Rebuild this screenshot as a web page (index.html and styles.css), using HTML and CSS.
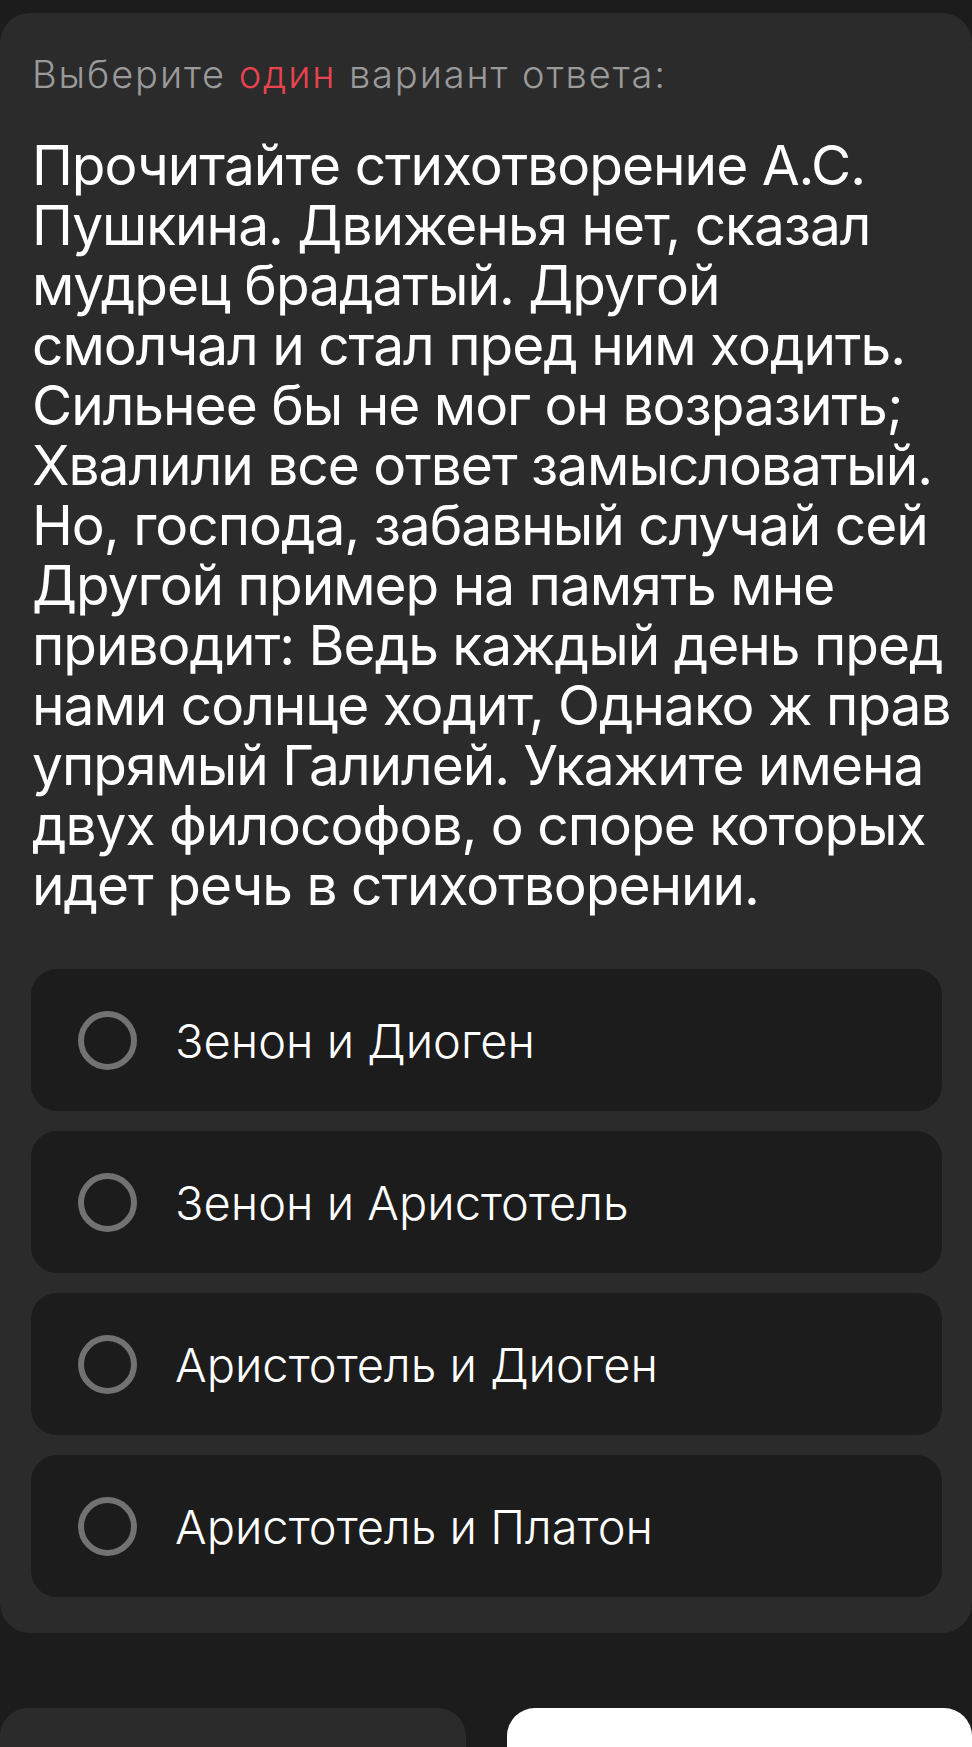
FILE: index.html
```html
<!DOCTYPE html>
<html lang="ru">
<head>
<meta charset="utf-8">
<title>Вопрос</title>
<link rel="stylesheet" href="styles.css">
</head>
<body>
<div class="page">
  <section class="card">
    <p class="prompt">Выберите <span class="accent">один</span> вариант ответа:</p>
    <p class="question">Прочитайте стихотворение А.С.<br>Пушкина. Движенья нет, сказал<br>мудрец брадатый. Другой<br>смолчал и стал пред ним ходить.<br>Сильнее бы не мог он возразить;<br>Хвалили все ответ замысловатый.<br>Но, господа, забавный случай сей<br>Другой пример на память мне<br>приводит: Ведь каждый день пред<br>нами солнце ходит, Однако ж прав<br>упрямый Галилей. Укажите имена<br>двух философов, о споре которых<br>идет речь в стихотворении.</p>
    <div class="options">
      <div class="option"><span class="radio"></span><span class="label">Зенон и Диоген</span></div>
      <div class="option"><span class="radio"></span><span class="label">Зенон и Аристотель</span></div>
      <div class="option"><span class="radio"></span><span class="label">Аристотель и Диоген</span></div>
      <div class="option"><span class="radio"></span><span class="label">Аристотель и Платон</span></div>
    </div>
  </section>
  <div class="actions">
    <div class="btn btn-dark"></div>
    <div class="btn btn-light"></div>
  </div>
</div>
</body>
</html>
```

FILE: styles.css
```css
html, body {
  margin: 0;
  padding: 0;
  background: #1c1c1c;
}

body {
  font-family: Inter, "Noto Sans", sans-serif;
  color: #ffffff;
  overflow: hidden;
}

.page {
  padding-top: 13px;
}

.card {
  background: #2b2b2b;
  border-radius: 30px;
  padding: 0 30px 36px 32px;
}

.prompt {
  margin: 0;
  padding-top: 38px;
  font-size: 38px;
  font-weight: 300;
  line-height: 46px;
  color: #9a9a9a;
  letter-spacing: 1.9px;
}

.accent {
  color: #e8434e;
}

.question {
  margin: 38px 0 0;
  font-size: 55px;
  line-height: 60px;
  font-weight: 400;
  color: #ffffff;
  letter-spacing: -1px;
  white-space: nowrap;
}

.options {
  display: flex;
  flex-direction: column;
  gap: 20px;
  margin-top: 54px;
  margin-left: -1px;
}

.option {
  display: flex;
  align-items: center;
  height: 142px;
  background: #1c1c1c;
  border-radius: 26px;
  padding-left: 47px;
}

.radio {
  flex: none;
  width: 47px;
  height: 47px;
  border: 6px solid #727272;
  border-radius: 50%;
}

.label {
  margin-left: 38px;
  font-size: 47px;
  font-weight: 300;
  color: #ffffff;
}

.actions {
  display: flex;
  gap: 41px;
  margin-top: 75px;
}

.btn {
  height: 90px;
  border-radius: 28px;
}

.btn-dark {
  width: 466px;
  background: #2b2b2b;
}

.btn-light {
  flex: 1;
  background: #ffffff;
}
```
